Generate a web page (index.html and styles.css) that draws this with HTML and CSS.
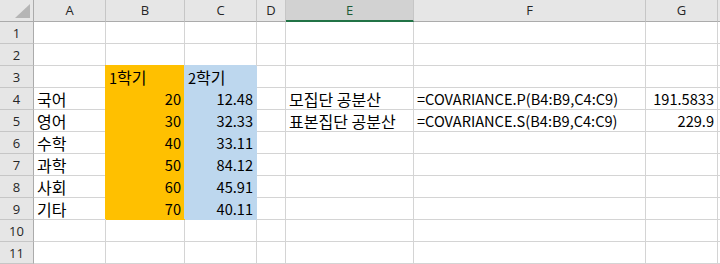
FILE: index.html
```html
<html>
<head>
    <meta charset="utf-8">
    <link rel="stylesheet" href="styles.css">
</head>
<body>
    <div class="sheet">
        <!-- column headers -->
        <div class="corner"><svg width="15" height="14" viewBox="0 0 15 14"><polygon points="15,0 15,14 0,14" fill="#b5b5b5"/></svg></div>
        <div class="hd">A</div>
        <div class="hd">B</div>
        <div class="hd">C</div>
        <div class="hd">D</div>
        <div class="hd sel">E</div>
        <div class="hd">F</div>
        <div class="hd">G</div>
        <div class="hd"></div>

        <div class="rh">1</div>
        <div class="c"></div><div class="c"></div><div class="c"></div><div class="c"></div>
        <div class="c"></div><div class="c"></div><div class="c"></div><div class="c"></div>

        <div class="rh">2</div>
        <div class="c"></div><div class="c"></div><div class="c"></div><div class="c"></div>
        <div class="c"></div><div class="c"></div><div class="c"></div><div class="c"></div>

        <div class="rh">3</div>
        <div class="c"></div>
        <div class="c or">1<span class="ko">학기</span></div>
        <div class="c bl">2<span class="ko">학기</span></div>
        <div class="c"></div><div class="c"></div><div class="c"></div><div class="c"></div><div class="c"></div>

        <div class="rh">4</div>
        <div class="c ko">국어</div>
        <div class="c or num">20</div>
        <div class="c bl num">12.48</div>
        <div class="c"></div>
        <div class="c ko">모집단 공분산</div>
        <div class="c">=COVARIANCE.P(B4:B9,C4:C9)</div>
        <div class="c num">191.5833</div>
        <div class="c"></div>

        <div class="rh">5</div>
        <div class="c ko">영어</div>
        <div class="c or num">30</div>
        <div class="c bl num">32.33</div>
        <div class="c"></div>
        <div class="c ko">표본집단 공분산</div>
        <div class="c">=COVARIANCE.S(B4:B9,C4:C9)</div>
        <div class="c num">229.9</div>
        <div class="c"></div>

        <div class="rh">6</div>
        <div class="c ko">수학</div>
        <div class="c or num">40</div>
        <div class="c bl num">33.11</div>
        <div class="c"></div><div class="c"></div><div class="c"></div><div class="c"></div><div class="c"></div>

        <div class="rh">7</div>
        <div class="c ko">과학</div>
        <div class="c or num">50</div>
        <div class="c bl num">84.12</div>
        <div class="c"></div><div class="c"></div><div class="c"></div><div class="c"></div><div class="c"></div>

        <div class="rh">8</div>
        <div class="c ko">사회</div>
        <div class="c or num">60</div>
        <div class="c bl num">45.91</div>
        <div class="c"></div><div class="c"></div><div class="c"></div><div class="c"></div><div class="c"></div>

        <div class="rh">9</div>
        <div class="c ko">기타</div>
        <div class="c or num">70</div>
        <div class="c bl num">40.11</div>
        <div class="c"></div><div class="c"></div><div class="c"></div><div class="c"></div><div class="c"></div>

        <div class="rh">10</div>
        <div class="c"></div><div class="c"></div><div class="c"></div><div class="c"></div>
        <div class="c"></div><div class="c"></div><div class="c"></div><div class="c"></div>

        <div class="rh">11</div>
        <div class="c"></div><div class="c"></div><div class="c"></div><div class="c"></div>
        <div class="c"></div><div class="c"></div><div class="c"></div><div class="c"></div>
    </div>
</body>
</html>
```
FILE: styles.css
```css
body {
    margin: 0;
    background: #fff;
    overflow: hidden;
}

.sheet {
    display: grid;
    grid-template-columns: 34px 72px 79px 72px 29px 128px 232px 72px 10px;
    grid-template-rows: 22px repeat(11, 22px);
    width: 720px;
    font-family: "Noto Sans CJK KR", "Noto Sans", sans-serif;
}

    .sheet > div {
        box-sizing: border-box;
        border-right: 1px solid #d4d4d4;
        border-bottom: 1px solid #d4d4d4;
    }

.corner {
    background: #e6e6e6;
    display: flex;
    align-items: flex-end;
    justify-content: flex-end;
    padding: 0 3px 3px 0;
    border-right-color: #ababab !important;
    border-bottom-color: #ababab !important;
}

.hd {
    background: #e6e6e6;
    color: #262626;
    font-family: "Open Sans", "Noto Sans", sans-serif;
    font-size: 13px;
    text-align: center;
    line-height: 21px;
    border-right-color: #c6c6c6 !important;
    border-bottom-color: #ababab !important;
}

    .hd.sel {
        background: #d2d2d2;
        color: #1d5c37;
        border-bottom: 2px solid #217346 !important;
        line-height: 20px;
    }

.rh {
    background: #e6e6e6;
    color: #262626;
    font-family: "Open Sans", "Noto Sans", sans-serif;
    font-size: 13px;
    text-align: center;
    line-height: 22px;
    border-right-color: #ababab !important;
    border-bottom-color: #c6c6c6 !important;
}

.c {
    font-size: 14.6px;
    color: #000;
    line-height: 20px;
    padding: 1px 3px 0 3px;
    white-space: nowrap;
    overflow: visible;
}

.ko {
    font-size: 16px;
}

.num {
    text-align: right;
}

.or {
    background: #ffc000;
    border-color: #ffc000 !important;
    box-shadow: -1px -1px 0 0 #ffc000;
}

.bl {
    background: #bdd7ee;
    border-color: #bdd7ee !important;
    box-shadow: -1px -1px 0 0 #bdd7ee;
}
```
